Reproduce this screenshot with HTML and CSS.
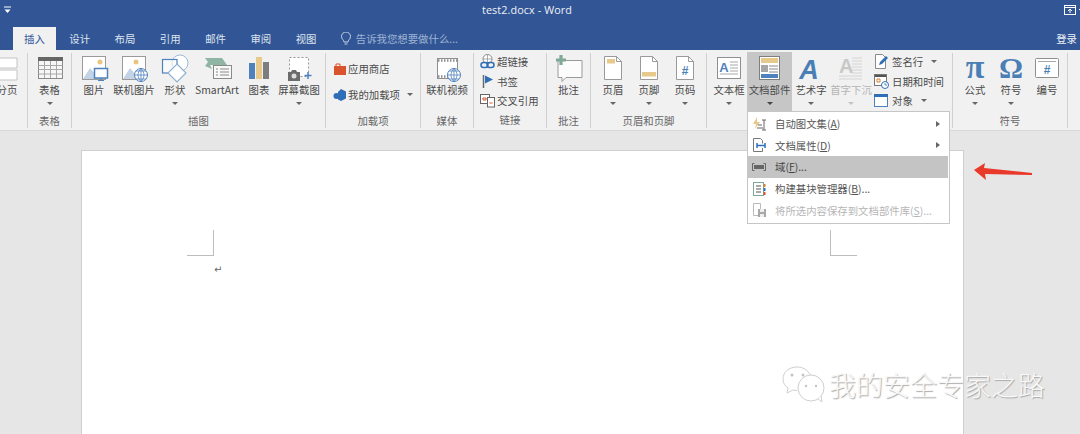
FILE: index.html
```html
<!DOCTYPE html>
<html lang="zh">
<head>
<meta charset="utf-8">
<title>test2.docx - Word</title>
<link rel="stylesheet" href="styles.css">
</head>
<body>
<div class="app">
  <header class="titlebar">
    <svg class="qat" width="10" height="10" viewBox="0 0 10 10"><path d="M1 2h7" stroke="#fff" stroke-width="1"/><path d="M1.500 4.500h6L4.500 8z" fill="#fff"/></svg>
    <span class="doc-title">test2.docx - Word</span>
    <svg class="display-btn" width="12" height="10" viewBox="0 0 12 10"><rect x=".5" y=".5" width="11" height="9" fill="none" stroke="#fff"/><path d="M.5 2.500h11" stroke="#fff"/><path d="M6 8V4M4 6l2-2 2 2" fill="none" stroke="#fff"/></svg>
    <span class="min-btn"></span>
  </header>
  <nav class="tabs">
    <span class="tab active">插入</span>
    <span class="tab">设计</span>
    <span class="tab">布局</span>
    <span class="tab">引用</span>
    <span class="tab">邮件</span>
    <span class="tab">审阅</span>
    <span class="tab">视图</span>
    <span class="tell">
      <svg width="12" height="14" viewBox="0 0 12 14"><path d="M4 10c0-2-2.500-2.800-2.500-5.500a4.500 4.500 0 0 1 9 0C10.500 7.200 8 8 8 10zM4.500 12h3" fill="none" stroke="#c6d2e6"/></svg>
      告诉我您想要做什么...
    </span>
    <span class="login">登录</span>
  </nav>
  <section class="ribbon">
    <div class="group g-pages">
      <div class="gbody">
        <div class="btn w34 cut">
          <svg class="ico" width="32" height="28" viewBox="0 0 32 28"><path d="M2 4h24v10H2zM2 16h24v10H2z" fill="#fff" stroke="#c4c4c4"/></svg>
          <span class="lbl">分页</span>
        </div>
      </div>
      <div class="glabel"></div>
    </div>

    <div class="group g-table">
      <div class="gbody">
        <div class="btn w43">
          <svg class="ico" width="32" height="28" viewBox="0 0 32 28"><rect x="4.500" y="3.500" width="24" height="21" fill="#f6f6f6" stroke="#8a8a8a"/><rect x="4" y="3" width="25" height="4" fill="#666"/><path d="M4.500 11.500h24M4.500 15.500h24M4.500 20h24M10.500 7v17M16.500 7v17M22.500 7v17" stroke="#a8a8a8" fill="none"/></svg>
          <span class="lbl">表格</span><i class="caret"></i>
        </div>
      </div>
      <div class="glabel">表格</div>
    </div>

    <div class="group g-illus">
      <div class="gbody">
        <div class="btn w38">
          <svg class="ico" width="32" height="28" viewBox="0 0 32 28"><rect x="4.500" y="2.500" width="23" height="23" fill="#fff" stroke="#9a9a9a"/><circle cx="22" cy="8" r="2.500" fill="#e9c67f"/><path d="M5 25l7-11 6 7 4-3 5 7z" fill="#c4d4e6"/><rect x="16.500" y="14.500" width="13" height="9.500" fill="#fff" stroke="#4f81bd" stroke-width="1.500"/><path d="M23 24v2M20 26.500h6" stroke="#4f81bd"/></svg>
          <span class="lbl">图片</span>
        </div>
        <div class="btn w42">
          <svg class="ico" width="32" height="28" viewBox="0 0 32 28"><rect x="4.500" y="2.500" width="23" height="23" fill="#fff" stroke="#9a9a9a"/><circle cx="18" cy="8" r="2.500" fill="#e9c67f"/><path d="M5 25l7-11 6 7 4-3 5 7z" fill="#c4d4e6"/><circle cx="23" cy="21" r="6.500" fill="#fff" stroke="#4f81bd"/><path d="M16.500 21h13M23 14.500v13M18 17h10M18 25h10M23 14.500c-4 4-4 9 0 13M23 14.500c4 4 4 9 0 13" fill="none" stroke="#4f81bd" stroke-width=".8"/></svg>
          <span class="lbl">联机图片</span>
        </div>
        <div class="btn w40">
          <svg class="ico" width="32" height="28" viewBox="0 0 32 28"><circle cx="21" cy="9" r="8" fill="#fff" stroke="#9dbad9"/><rect x="3.500" y="5.500" width="14.500" height="13.500" fill="#fff" fill-opacity=".6" stroke="#4f81bd" stroke-width="1.200"/><path d="M18 10l9 9-9 9-9-9z" fill="#fff" stroke="#8fb0d3" stroke-width="1.200"/></svg>
          <span class="lbl">形状</span><i class="caret"></i>
        </div>
        <div class="btn w44">
          <svg class="ico" width="32" height="28" viewBox="0 0 32 28"><path d="M4 4h17l5 7H9l2 4-7-3 3-4z" fill="#8fb5a4"/><rect x="12.500" y="11.500" width="18" height="13" fill="#f8f8f8" stroke="#8a8a8a"/><path d="M15 15h2M19 15h9M15 18h2M19 18h9M15 21h2M19 21h9" stroke="#8a8a8a"/></svg>
          <span class="lbl">SmartArt</span>
        </div>
        <div class="btn w40">
          <svg class="ico" width="32" height="28" viewBox="0 0 32 28"><rect x="6" y="9" width="6" height="16" fill="#4f81bd"/><rect x="13" y="3" width="6" height="22" fill="#e8c98c"/><rect x="20" y="8" width="6" height="17" fill="#7d7d7d"/></svg>
          <span class="lbl">图表</span>
        </div>
        <div class="btn w40">
          <svg class="ico" width="32" height="28" viewBox="0 0 32 28"><rect x="6.500" y="3.500" width="19" height="19" fill="#fff" stroke="#999" stroke-dasharray="2 2"/><path d="M5 18h3l1-2h4l1 2h3v9H5z" fill="#6b6b6b"/><circle cx="11" cy="22" r="2.500" fill="#ddd"/><path d="M25 18v7M21.500 21.500h7" stroke="#4f81bd" stroke-width="1.500"/></svg>
          <span class="lbl">屏幕截图</span><i class="caret"></i>
        </div>
      </div>
      <div class="glabel">插图</div>
    </div>

    <div class="group g-addin">
      <div class="gbody col-two">
        <div class="small">
          <svg width="14" height="14" viewBox="0 0 14 14"><path d="M1 4h12v9H1z" fill="#d9532c"/><path d="M3 4V2h4v2" fill="none" stroke="#d9532c"/></svg>
          <span>应用商店</span>
        </div>
        <div class="small">
          <svg width="14" height="14" viewBox="0 0 14 14"><path d="M8 1l5 2.500v7L8 13l-3-1.500V4z" fill="#2e6fb7"/><circle cx="3.500" cy="8" r="3" fill="#2e6fb7"/></svg>
          <span>我的加载项</span><i class="caret inline wide"></i>
        </div>
      </div>
      <div class="glabel">加载项</div>
    </div>

    <div class="group g-media">
      <div class="gbody">
        <div class="btn w52">
          <svg class="ico" width="32" height="28" viewBox="0 0 32 28"><rect x="6.500" y="4.500" width="20" height="20" fill="#fff" stroke="#8f8f8f"/><path d="M7 6.500h19M7 22.500h19" stroke="#8f8f8f" stroke-width="2.500" stroke-dasharray="1.500 1.500"/><circle cx="23" cy="21" r="6.500" fill="#fff" stroke="#4f81bd"/><path d="M16.500 21h13M23 14.500v13M18 17h10M18 25h10M23 14.500c-4 4-4 9 0 13M23 14.500c4 4 4 9 0 13" fill="none" stroke="#4f81bd" stroke-width=".8"/></svg>
          <span class="lbl">联机视频</span>
        </div>
      </div>
      <div class="glabel">媒体</div>
    </div>

    <div class="group g-links">
      <div class="gbody col-three">
        <div class="small">
          <svg width="15" height="15" viewBox="0 0 15 15"><circle cx="7.500" cy="5" r="4.500" fill="#fff" stroke="#8a8a8a"/><path d="M3 5h9M7.500 .5v9" stroke="#8a8a8a" stroke-width=".7"/><rect x="1" y="8.500" width="7" height="5" rx="2.500" fill="none" stroke="#2e6fb7" stroke-width="1.500"/><rect x="7" y="8.500" width="7" height="5" rx="2.500" fill="none" stroke="#2e6fb7" stroke-width="1.500"/></svg>
          <span>超链接</span>
        </div>
        <div class="small">
          <svg width="15" height="15" viewBox="0 0 15 15"><path d="M3.500 1v13" stroke="#6b6b6b" stroke-width="1.500"/><path d="M5 1.500l8 4-8 4z" fill="#2e6fb7"/></svg>
          <span>书签</span>
        </div>
        <div class="small">
          <svg width="15" height="15" viewBox="0 0 15 15"><rect x=".5" y="1.500" width="9" height="9" fill="#fff" stroke="#666"/><rect x="7.500" y="4.500" width="7" height="9.500" fill="#fff" stroke="#666"/><path d="M3 5h3v2H3zM9.500 10h3" stroke="#d9532c" fill="none"/></svg>
          <span>交叉引用</span>
        </div>
      </div>
      <div class="glabel">链接</div>
    </div>

    <div class="group g-comment">
      <div class="gbody">
        <div class="btn w43">
          <svg class="ico" width="32" height="28" viewBox="0 0 32 28"><path d="M5 6.500h24v17H13l-4 4v-4H5z" fill="#fcfcfc" stroke="#9a9a9a"/><path d="M8 1v10M3 6h10" stroke="#7fa897" stroke-width="3.200"/></svg>
          <span class="lbl">批注</span>
        </div>
      </div>
      <div class="glabel">批注</div>
    </div>

    <div class="group g-hf">
      <div class="gbody">
        <div class="btn w36">
          <svg class="ico" width="32" height="28" viewBox="0 0 32 28"><path d="M7.500 2.500h12l5 5v18h-17z" fill="#fff" stroke="#9a9a9a"/><path d="M19.500 2.500v5h5" fill="none" stroke="#9a9a9a"/><rect x="10" y="5" width="8" height="4.500" fill="#e8c98c"/></svg>
          <span class="lbl">页眉</span><i class="caret"></i>
        </div>
        <div class="btn w36">
          <svg class="ico" width="32" height="28" viewBox="0 0 32 28"><path d="M7.500 2.500h12l5 5v18h-17z" fill="#fff" stroke="#9a9a9a"/><path d="M19.500 2.500v5h5" fill="none" stroke="#9a9a9a"/><rect x="9" y="18" width="14" height="4.500" fill="#e8c98c"/></svg>
          <span class="lbl">页脚</span><i class="caret"></i>
        </div>
        <div class="btn w36">
          <svg class="ico" width="32" height="28" viewBox="0 0 32 28"><path d="M7.500 2.500h12l5 5v18h-17z" fill="#fff" stroke="#9a9a9a"/><path d="M19.500 2.500v5h5" fill="none" stroke="#9a9a9a"/><text x="16" y="21" class="hash">#</text></svg>
          <span class="lbl">页码</span><i class="caret"></i>
        </div>
      </div>
      <div class="glabel">页眉和页脚</div>
    </div>

    <div class="group g-text">
      <div class="gbody">
        <div class="btn w36">
          <svg class="ico" width="32" height="28" viewBox="0 0 32 28"><rect x="4.500" y="3.500" width="23" height="21" fill="#fff" stroke="#8f8f8f"/><text x="11" y="18" class="letter-a">A</text><path d="M17 8h8M17 11h8M17 14h8M17 17h8M7 20h18" stroke="#a8a8a8"/></svg>
          <span class="lbl">文本框</span><i class="caret"></i>
        </div>
        <div class="btn w45 pressed">
          <svg class="ico" width="32" height="28" viewBox="0 0 32 28"><rect x="5.500" y="2.500" width="20" height="23" fill="#fff" stroke="#7f7f7f"/><rect x="7" y="4" width="17" height="5" fill="#e8c98c"/><rect x="7" y="11" width="7" height="7" fill="#a6a6a6"/><path d="M15 12h9M15 15h9M15 18h9" stroke="#8a8a8a"/><rect x="7" y="20" width="17" height="4" fill="#4f81bd"/></svg>
          <span class="lbl">文档部件</span><i class="caret dark"></i>
        </div>
        <div class="btn w38">
          <svg class="ico" width="32" height="28" viewBox="0 0 32 28"><text x="14" y="25" class="wordart">A</text></svg>
          <span class="lbl">艺术字</span><i class="caret"></i>
        </div>
        <div class="btn w42 off">
          <svg class="ico" width="32" height="28" viewBox="0 0 32 28"><text x="4" y="19" class="dropcap">A</text><path d="M17 4h10M17 7h10M17 10h10M17 13h10M17 16h10M17 19h10M4 22h23M4 25h23" stroke="#d4d4d4"/></svg>
          <span class="lbl">首字下沉</span><i class="caret"></i>
        </div>
        <div class="col-three stack">
          <div class="small">
            <svg width="15" height="15" viewBox="0 0 15 15"><path d="M1.500 .5h7l3 3v11h-10z" fill="#fff" stroke="#8a8a8a"/><path d="M5 11l1-3 6-6 2 2-6 6z" fill="#2e6fb7"/></svg>
            <span>签名行</span><i class="caret inline"></i>
          </div>
          <div class="small">
            <svg width="15" height="15" viewBox="0 0 15 15"><rect x=".5" y=".5" width="12" height="11" fill="#fff" stroke="#777"/><path d="M1 2h11" stroke="#555" stroke-width="2"/><path d="M3 5h3v3H3z" fill="none" stroke="#d9802c"/><circle cx="11" cy="11" r="3.500" fill="#fff" stroke="#2e6fb7"/><path d="M11 9v2h2" fill="none" stroke="#2e6fb7" stroke-width=".8"/></svg>
            <span>日期和时间</span>
          </div>
          <div class="small">
            <svg width="15" height="15" viewBox="0 0 15 15"><rect x=".5" y="1.500" width="13" height="12" fill="#fff" stroke="#4f81bd"/><rect x="0" y="1" width="14" height="3" fill="#2e6fb7"/></svg>
            <span>对象</span><i class="caret inline"></i>
          </div>
        </div>
      </div>
      <div class="glabel"></div>
    </div>

    <div class="group g-symbol">
      <div class="gbody">
        <div class="btn w36">
          <svg class="ico" width="32" height="28" viewBox="0 0 32 28"><text x="16" y="24" class="glyph pi">π</text></svg>
          <span class="lbl">公式</span><i class="caret"></i>
        </div>
        <div class="btn w36">
          <svg class="ico" width="32" height="28" viewBox="0 0 32 28"><text x="16" y="24" class="glyph omega">Ω</text></svg>
          <span class="lbl">符号</span><i class="caret"></i>
        </div>
        <div class="btn w36">
          <svg class="ico" width="32" height="28" viewBox="0 0 32 28"><rect x="4.500" y="4.500" width="23" height="19" rx="1" fill="#fff" stroke="#8f8f8f"/><path d="M7 7.500h18" stroke="#a8a8a8"/><text x="16" y="20" class="hash">#</text></svg>
          <span class="lbl">编号</span>
        </div>
      </div>
      <div class="glabel">符号</div>
    </div>
  </section>

  <main class="workspace">
    <div class="page">
      <div class="marks">
        <span class="mark mark-l"></span>
        <span class="mark mark-r"></span>
      </div>
      <span class="para">↵</span>
    </div>
  </main>
</div>

<div class="menu">
  <div class="mi">
    <svg width="16" height="16" viewBox="0 0 16 16"><path d="M6 1L2 8h3l-1 5 5-7H6z" fill="#e8c98c"/><path d="M6 12h6M13 4v10M11 4h4M11 14h4M7 9h4" stroke="#666" fill="none"/></svg>
    <span class="mt">自动图文集(<u>A</u>)</span><i class="sub"></i>
  </div>
  <div class="mi">
    <svg width="16" height="16" viewBox="0 0 16 16"><path d="M2.500 1.500h7l2 2v3M11.500 11v3.500h-9v-13" fill="#fff" stroke="#777"/><path d="M6 8.500h8M6 6v5M14 6v5" stroke="#2e6fb7" stroke-width="1.500" fill="none"/></svg>
    <span class="mt">文档属性(<u>D</u>)</span><i class="sub"></i>
  </div>
  <div class="mi hot">
    <svg width="16" height="16" viewBox="0 0 16 16"><path d="M3.500 4.500h-2v7h2M12.500 4.500h2v7h-2" fill="none" stroke="#666"/><rect x="3" y="6" width="10" height="4" fill="#666"/></svg>
    <span class="mt">域(<u>F</u>)...</span>
  </div>
  <div class="mi">
    <svg width="16" height="16" viewBox="0 0 16 16"><rect x="2.500" y="1.500" width="10" height="13" fill="#fff" stroke="#7fa897"/><path d="M5 5h5M5 8h5M5 11h5" stroke="#555"/><path d="M13.500 3v3" stroke="#d9802c" stroke-width="2"/><path d="M13.500 7v3" stroke="#2e6fb7" stroke-width="2"/><path d="M13.500 11v3" stroke="#d9532c" stroke-width="2"/></svg>
    <span class="mt">构建基块管理器(<u>B</u>)...</span>
  </div>
  <div class="mi dis">
    <svg width="16" height="16" viewBox="0 0 16 16"><path d="M2.500 1.500h7v12h-7z" fill="#fff" stroke="#bbb"/><rect x="7" y="7" width="8" height="8" fill="#a8a8a8"/><rect x="9" y="7" width="4" height="3" fill="#eee"/><rect x="9" y="12" width="4" height="3" fill="#eee"/></svg>
    <span class="mt">将所选内容保存到文档部件库(<u>S</u>)...</span>
  </div>
</div>

<svg class="arrow" width="60" height="18" viewBox="0 0 60 18"><path d="M0 7L11 0l-1 5 48 5v2L11 11l1 6z" fill="#e8392a"/></svg>

<div class="watermark">
  <svg width="44" height="38" viewBox="0 0 44 38"><path d="M15 1C7 1 1 6 1 13c0 4 2 7 5 9l-1 5 6-3c1 .3 3 .5 4 .5" fill="#fff" stroke="#cfcfcf"/><path d="M15 1c7 0 12 4 14 10" fill="#fff" stroke="#cfcfcf"/><circle cx="29" cy="22" r="13" fill="#fff" stroke="#cfcfcf"/><path d="M36 33l4 3-1-6" fill="#fff" stroke="#cfcfcf"/><circle cx="10" cy="9" r="1.500" fill="#c4c4c4"/><circle cx="21" cy="9" r="1.500" fill="#c4c4c4"/><circle cx="24" cy="20" r="1.200" fill="#c4c4c4"/><circle cx="34" cy="20" r="1.200" fill="#c4c4c4"/></svg>
  <span class="wm-text">我的安全专家之路</span>
</div>
</body>
</html>
```
FILE: styles.css
```css
* { box-sizing: border-box; }
html, body { margin: 0; height: 100%; overflow: hidden; }
body {
  position: relative;
  background: #e6e6e6;
  font-family: "Noto Sans CJK SC", "Noto Sans", sans-serif;
  font-size: 10.4px;
  color: #4a4a4a;
}
.app { display: flex; flex-direction: column; height: 434px; }

/* title bar */
.titlebar {
  height: 27px;
  background: #325695;
  display: flex;
  align-items: center;
  padding: 0 0 8px 3px;
  color: #eef1f7;
  flex: none;
}
.qat { flex: none; }
.doc-title {
  flex: 1;
  text-align: center;
  font-family: "Open Sans", sans-serif;
  font-size: 10.8px;
  padding-right: 23px;
  letter-spacing: .1px;
}
.display-btn { flex: none; margin-right: 1px; }
.min-btn { width: 1px; height: 1px; background: #fff; margin-left: 2px; flex: none; }

/* tabs */
.tabs {
  height: 23px;
  background: #325695;
  display: flex;
  align-items: stretch;
  padding-left: 13px;
  color: #dfe5f0;
  flex: none;
}
.tab {
  width: 45.300px;
  display: flex;
  align-items: center;
  justify-content: center;
  flex: none;
}
.tab.active {
  width: 43px;
  background: #f1f1f1;
  color: #2f5597;
  margin-right: 1px;
}
.tell {
  margin-left: 11px;
  display: flex;
  align-items: center;
  gap: 4px;
  color: #9fb3d4;
}
.login { margin-left: auto; margin-right: 3px; align-self: center; color: #eef1f7; }

/* ribbon */
.ribbon {
  height: 81px;
  background: #f1f1f1;
  border-bottom: 1px solid #d8d8d8;
  display: flex;
  padding-top: 3px;
  flex: none;
  overflow: hidden;
}
.group {
  height: 75px;
  display: flex;
  flex-direction: column;
  border-right: 1px solid #d0d0d0;
  flex: none;
}
.gbody { height: 60px; display: flex; }
.glabel {
  height: 15px;
  line-height: 15px;
  text-align: center;
  color: #666;
}
.g-pages { width: 28px; }
.g-table { width: 44px; }
.g-illus { width: 254px; }
.g-addin { width: 95px; }
.g-media { width: 53px; }
.g-links { width: 73px; }
.g-comment { width: 44px; }
.g-hf { width: 116px; }
.g-text { width: 246px; }
.g-symbol { width: 115px; }
.g-illus .gbody { padding-left: 3px; }
.g-hf .gbody { padding-left: 4px; }
.g-text .gbody { padding-left: 4px; }
.g-symbol .gbody { padding-left: 4px; }

.btn {
  display: flex;
  flex-direction: column;
  align-items: center;
  padding-top: 1px;
  height: 60px;
  flex: none;
  white-space: nowrap;
}
.w34 { width: 34px; }
.w36 { width: 36px; }
.w38 { width: 38px; }
.w40 { width: 40px; }
.w42 { width: 42px; }
.w43 { width: 43px; }
.w44 { width: 44px; }
.w45 { width: 45px; }
.w52 { width: 52px; }
.cut { margin-left: -10px; }
.ico { flex: none; display: block; overflow: visible; }
.lbl { height: 15px; line-height: 15px; }
.caret {
  display: block;
  width: 0;
  height: 0;
  margin-top: 5px;
  border-left: 3px solid transparent;
  border-right: 3px solid transparent;
  border-top: 3px solid #666;
}
.caret.dark { border-top-color: #444; }
.caret.inline { margin: 0 0 0 5px; }
.caret.wide { margin-left: 6px; }
.pressed { background: #c6c6c6; height: 59px; margin-top: -1px; padding-top: 2px; }
.off .lbl { color: #b4b4b4; }
.off .caret { border-top-color: #c4c4c4; }
.glyph {
  font-family: "Liberation Serif", serif;
  font-weight: bold;
  fill: #4a7fb5;
  text-anchor: middle;
}
.pi { font-size: 34px; }
.omega { font-size: 30px; }

.small { display: flex; align-items: center; gap: 2px; white-space: nowrap; height: 19.500px; flex: none; }
.small svg { flex: none; }
.col-two { flex-direction: column; padding: 6px 0 0 7px; gap: 6.500px; }
.col-two .small { gap: 1px; }
.col-three { display: flex; flex-direction: column; padding: 0 0 0 6px; margin-top: -1px; }
.stack { padding-left: 2px; }
.stack .small { gap: 3px; }

.hash { font-family: "Liberation Sans", sans-serif; font-weight: bold; font-size: 12px; fill: #4a7fb5; text-anchor: middle; }
.letter-a { font-family: "Liberation Sans", sans-serif; font-weight: bold; font-size: 13px; fill: #4f81bd; text-anchor: middle; }
.wordart { font-family: "Liberation Sans", sans-serif; font-weight: bold; font-style: italic; font-size: 27px; fill: #4a7fb5; text-anchor: middle; }
.dropcap { font-family: "Liberation Sans", sans-serif; font-weight: bold; font-size: 20px; fill: #c8c8c8; }

/* document */
.workspace {
  flex: 1;
  min-height: 0;
  overflow: hidden;
  padding: 19px 0 0 81px;
  background: #e6e6e6;
}
.page {
  width: 883px;
  height: 300px;
  background: #fff;
  border: 1px solid #cfcfcf;
  padding: 79px 106px 0 105px;
}
.marks { display: flex; justify-content: space-between; height: 26px; }
.mark { display: block; width: 27px; height: 26px; border-bottom: 1px solid #bdbdbd; }
.mark-l { border-right: 1px solid #bdbdbd; }
.mark-r { border-left: 1px solid #bdbdbd; }
.para {
  display: block;
  margin-top: 7px;
  padding-left: 27px;
  line-height: 13px;
  font-size: 10px;
  color: #666;
  font-family: "DejaVu Sans", sans-serif;
}

/* dropdown */
.menu {
  position: absolute;
  left: 747px;
  top: 111px;
  width: 203px;
  height: 113px;
  background: #fff;
  border: 1px solid #c6c6c6;
  padding: 1px 1px 2px 0;
  display: flex;
  flex-direction: column;
}
.mi {
  height: 21.600px;
  display: flex;
  align-items: center;
  padding-left: 3px;
  gap: 8px;
  color: #555;
  flex: none;
}
.mi svg { flex: none; }
.mi .mt { flex: 1; white-space: nowrap; }
.mi.hot { background: #c4c4c4; color: #444; }
.mi.dis { color: #b6b6b6; }
.sub {
  display: block;
  width: 0;
  height: 0;
  margin-right: 8px;
  border-top: 3.500px solid transparent;
  border-bottom: 3.500px solid transparent;
  border-left: 4px solid #666;
}

.arrow { position: absolute; left: 974px; top: 163px; }

.watermark {
  position: absolute;
  left: 782px;
  top: 366px;
  display: flex;
  align-items: center;
  gap: 3px;
}
.wm-text {
  font-size: 27px;
  line-height: 38px;
  font-weight: 300;
  color: #f8f8f8;
  text-shadow: 1px 1px 1px #a8a8a8;
  white-space: nowrap;
}
```
